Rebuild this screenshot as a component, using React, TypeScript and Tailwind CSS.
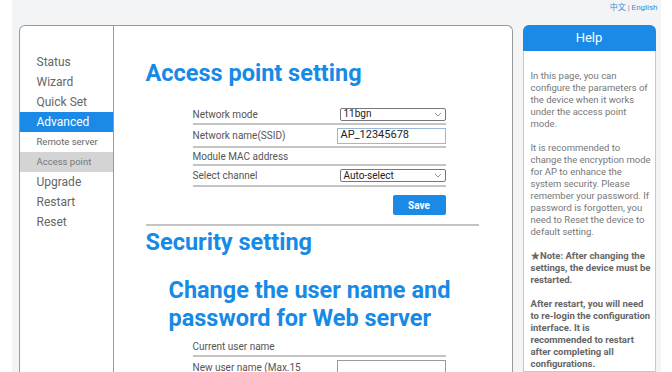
import React from 'react';

const menu = [
  { label: 'Status' },
  { label: 'Wizard' },
  { label: 'Quick Set' },
  { label: 'Advanced', active: true },
  { label: 'Remote server', sub: true },
  { label: 'Access point', sub: true, current: true },
  { label: 'Upgrade' },
  { label: 'Restart' },
  { label: 'Reset' },
];

const helpBlocks: { bold?: boolean; lines: string[] }[] = [
  { lines: ['In this page, you can', 'configure the parameters of', 'the device when it works', 'under the access point', 'mode.'] },
  {
    lines: [
      'It is recommended to',
      'change the encryption mode',
      'for AP to enhance the',
      'system security. Please',
      'remember your password. If',
      'password is forgotten, you',
      'need to Reset the device to',
      'default setting.',
    ],
  },
  { bold: true, lines: ['★Note: After changing the', 'settings, the device must be', 'restarted.'] },
  {
    bold: true,
    lines: [
      'After restart, you will need',
      'to re-login the configuration',
      'interface. It is',
      'recommended to restart',
      'after completing all',
      'configurations.',
    ],
  },
];

function Chevron() {
  return (
    <svg width="8" height="5" viewBox="0 0 8 5" className="text-[#888]">
      <path d="M1 1l3 3 3-3" fill="none" stroke="currentColor" strokeWidth="0.9" />
    </svg>
  );
}

function SelectBox({ value }: { value: string }) {
  return (
    <div className="w-[106px] h-[13px] border border-[#777] rounded-[2px] bg-white flex items-center justify-between pl-[3px] pr-[3px] text-[10px] leading-none text-[#222]">
      <span>{value}</span>
      <Chevron />
    </div>
  );
}

function Row({ label, children, h = 'h-[20px]' }: { label: string; children?: React.ReactNode; h?: string }) {
  return (
    <div className={`flex items-center justify-between border-b-2 border-[#c4c4c4] ${h}`}>
      <span className="text-[10px] text-[#555]">{label}</span>
      {children}
    </div>
  );
}

export default function App() {
  return (
    <div className="w-[672px] h-[372px] overflow-hidden bg-white" style={{ fontFamily: 'Roboto, "Noto Sans CJK SC", sans-serif' }}>
      <div className="mx-auto w-[649px] h-full bg-[#f3f4f6] flex flex-col">
        {/* Language links */}
        <div className="h-[25px] flex justify-end items-start pt-[2px] pr-[3px] text-[8px] text-[#3a8ad8]">
          <span>中文</span>
          <span className="mx-[2px] text-[#888]">|</span>
          <span>English</span>
        </div>

        <div className="flex flex-1 min-h-0 pl-[7px] pr-[5px] gap-[10px]">
          {/* Main card */}
          <div className="w-[494px] bg-white border border-b-0 border-[#9a9a9a] rounded-t-[6px] flex">
            {/* Sidebar */}
            <div className="w-[94px] border-r border-[#9a9a9a] pt-[26px] shrink-0">
              {menu.map((m) => (
                <div
                  key={m.label}
                  className={`h-[20px] flex items-center pl-[17px] ${
                    m.active ? 'bg-[#1a8ae6] text-white' : m.current ? 'bg-[#d4d4d4] text-[#777]' : 'text-[#666]'
                  } ${m.sub ? 'text-[9.5px]' : 'text-[12px]'}`}
                >
                  {m.label}
                </div>
              ))}
            </div>

            {/* Content */}
            <div className="flex-1 pl-[32px] pr-[33px] pt-[33px]">
              <h1 className="text-[23.5px] font-bold text-[#168ae6] leading-[28px]">Access point setting</h1>

              <div className="ml-[47px] w-[253px] mt-[18px]">
                <Row label="Network mode">
                  <SelectBox value="11bgn" />
                </Row>
                <Row label="Network name(SSID)" h="h-[23px]">
                  <div className="w-[109px] h-[16px] border border-[#9ab8d8] bg-white flex items-center pl-[3px] text-[11px] text-[#222]">
                    AP_12345678
                  </div>
                </Row>
                <Row label="Module MAC address" h="h-[18px]" />
                <Row label="Select channel" h="h-[21px]">
                  <SelectBox value="Auto-select" />
                </Row>
                <div className="flex justify-end mt-[8px]">
                  <button className="w-[53px] h-[20px] bg-[#1a8ae6] text-white text-[10px] font-bold rounded-[2px]">Save</button>
                </div>
              </div>

              <div className="mt-[9px] border-t-2 border-[#c4c4c4]" />

              <h2 className="mt-[2px] text-[23.5px] font-bold text-[#168ae6] leading-[28px]">Security setting</h2>

              <h3 className="mt-[20px] ml-[23px] text-[23.5px] font-bold text-[#168ae6] leading-[28px]">
                Change the user name and
                <br />
                password for Web server
              </h3>

              <div className="ml-[47px] w-[253px] mt-[6px]">
                <Row label="Current user name" h="h-[19px]" />
                <div className="flex items-start justify-between pt-[3px]">
                  <span className="text-[10px] text-[#555] w-[110px] leading-[12px] pt-[2px]">New user name (Max.15 characters)</span>
                  <div className="w-[109px] h-[18px] border border-[#9a9a9a] bg-white" />
                </div>
              </div>
            </div>
          </div>

          {/* Help panel */}
          <div className="w-[133px] flex flex-col">
            <div className="h-[26px] bg-[#1a8ae6] rounded-t-[6px] flex items-center justify-center text-white text-[13px]">Help</div>
            <div className="flex-1 bg-white border border-t-0 border-[#c8c8c8] pl-[7px] pt-[19px] text-[9.5px] leading-[12px] text-[#777] whitespace-nowrap">
              {helpBlocks.map((b, i) => (
                <p key={i} className={`${i > 0 ? 'mt-[12px]' : ''} ${b.bold ? 'font-bold text-[#666]' : ''}`}>
                  {b.lines.map((l, j) => (
                    <React.Fragment key={j}>
                      {l}
                      {j < b.lines.length - 1 && <br />}
                    </React.Fragment>
                  ))}
                </p>
              ))}
            </div>
          </div>
        </div>
      </div>
    </div>
  );
}
